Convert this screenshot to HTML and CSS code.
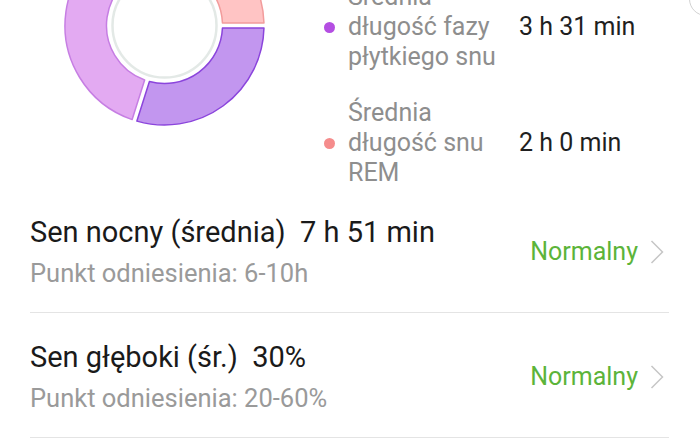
FILE: index.html
```html
<!DOCTYPE html>
<html lang="pl">
<head>
    <meta charset="UTF-8">
    <meta name="viewport" content="width=device-width, initial-scale=1.0">
    <title>Sen - podsumowanie</title>
    <link rel="stylesheet" href="styles.css">
</head>
<body>

    <div class="fab"></div>

    <div class="summary">
        <div class="chart">
            <svg id="donut" width="201" height="201" viewBox="0 0 201 201"></svg>
        </div>
        <div class="legend">
            <div class="legend-item">
                <span class="dot light"></span>
                <span class="legend-label">Średnia długość fazy płytkiego snu</span>
                <span class="legend-value">3 h 31 min</span>
            </div>
            <div class="legend-item">
                <span class="dot rem"></span>
                <span class="legend-label">Średnia długość snu REM</span>
                <span class="legend-value">2 h 0 min</span>
            </div>
        </div>
    </div>

    <div class="stat-row">
        <div class="stat-text">
            <div class="stat-title">Sen nocny (średnia)&nbsp; 7 h 51 min</div>
            <div class="stat-ref">Punkt odniesienia: 6-10h</div>
        </div>
        <div class="stat-status">
            Normalny
            <svg class="chevron" width="14" height="24" viewBox="0 0 14 24"><polyline points="1.5,1 12.5,12 1.5,23" /></svg>
        </div>
    </div>

    <div class="stat-row">
        <div class="stat-text">
            <div class="stat-title">Sen głęboki (śr.)&nbsp; 30%</div>
            <div class="stat-ref">Punkt odniesienia: 20-60%</div>
        </div>
        <div class="stat-status">
            Normalny
            <svg class="chevron" width="14" height="24" viewBox="0 0 14 24"><polyline points="1.5,1 12.5,12 1.5,23" /></svg>
        </div>
    </div>

    <script>
        // minuty w kolejnych fazach, zgodnie z ruchem wskazówek od godziny 3
        const phases = [
            { minutes: 141, fill: '#c296ef', stroke: '#8b45dc' },
            { minutes: 211, fill: '#e3aaf2', stroke: '#c67ee3' },
            { minutes: 120, fill: '#ffc4c4', stroke: '#f29c9c' }
        ];

        const cx = 100.5, cy = 100.5, R = 99.5, r = 58, gap = 5;
        const total = phases.reduce((s, p) => s + p.minutes, 0);
        const svg = document.getElementById('donut');

        function pt(radius, a) {
            return (cx + radius * Math.cos(a)).toFixed(2) + ' ' + (cy + radius * Math.sin(a)).toFixed(2);
        }

        let html = `<circle cx="${cx}" cy="${cy}" r="52" fill="#fff" stroke="#e3e9e6" stroke-width="2.5"/>`;
        let start = 0;
        phases.forEach(p => {
            const sweep = p.minutes / total * Math.PI * 2;
            const end = start + sweep;
            const dO = Math.asin(gap / 2 / R), dI = Math.asin(gap / 2 / r);
            const large = sweep > Math.PI ? 1 : 0;
            const d = `M ${pt(R, start + dO)} A ${R} ${R} 0 ${large} 1 ${pt(R, end - dO)} ` +
                      `L ${pt(r, end - dI)} A ${r} ${r} 0 ${large} 0 ${pt(r, start + dI)} Z`;
            html += `<path d="${d}" fill="${p.fill}" stroke="${p.stroke}" stroke-width="1.5" stroke-linejoin="round"/>`;
            start = end;
        });
        svg.innerHTML = html;
    </script>

</body>
</html>
```

FILE: styles.css
```css
body {
    font-family: Roboto, "Noto Sans", Arial, sans-serif;
    margin: 0;
    width: 700px;
    height: 441px;
    overflow: hidden;
    background-color: #fff;
    color: #1c1c1c;
    position: relative;
}
.fab {
    position: absolute;
    left: 689px;
    top: -18px;
    width: 32px;
    height: 32px;
    border: 1.5px solid #d2d2d2;
    border-radius: 50%;
    background: #fff;
}
.summary {
    display: flex;
    margin-top: -140px;
    height: 328px;
}
.chart {
    margin: 65px 0 0 64px;
    width: 201px;
    height: 201px;
}
.chart svg {
    display: block;
}
.legend {
    margin-left: 59px;
    padding-top: 122px;
    display: flex;
    flex-direction: column;
    gap: 26px;
}
.legend-item {
    display: grid;
    grid-template-columns: 11px 155px auto;
    column-gap: 13px;
    align-items: center;
    font-size: 25px;
    line-height: 30px;
}
.legend-item .legend-value {
    margin-left: 3px;
}
.dot {
    width: 11px;
    height: 11px;
    border-radius: 50%;
}
.dot.light { background-color: #b44ee2; }
.dot.rem { background-color: #f58c8c; }
.legend-label {
    color: #8e8e8e;
}
.legend-value {
    color: #1f1f1f;
    white-space: nowrap;
}
.stat-row {
    display: flex;
    align-items: center;
    justify-content: space-between;
    margin: 0 31px 0 30px;
    padding: 26px 5px 23px 0;
    border-bottom: 1px solid #e4e4e4;
}
.stat-title {
    font-size: 29px;
    line-height: 36px;
    color: #1a1a1a;
}
.stat-ref {
    margin-top: 7px;
    font-size: 25.5px;
    line-height: 32px;
    color: #9a9a9a;
}
.stat-status {
    display: flex;
    align-items: center;
    gap: 12px;
    font-size: 25px;
    color: #5cb43a;
}
.chevron polyline {
    fill: none;
    stroke: #c6c6c6;
    stroke-width: 1.5;
}
```
